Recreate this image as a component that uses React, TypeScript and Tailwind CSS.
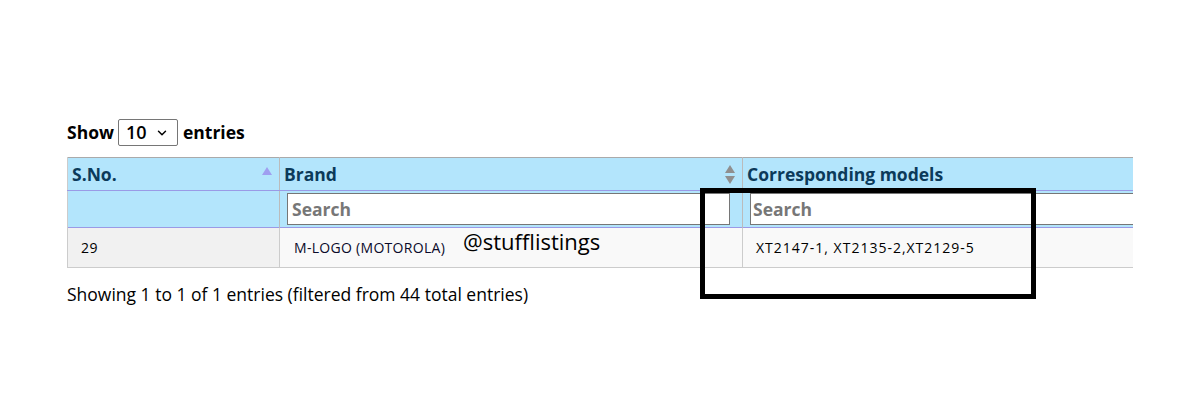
import { ChevronDown } from 'lucide-react';

const SortAsc = () => (
  <svg width="10" height="8" viewBox="0 0 10 8" className="shrink-0">
    <path d="M5 0 L10 8 L0 8 Z" fill="#9f9ff0" />
  </svg>
);

const SortBoth = () => (
  <svg width="10" height="19" viewBox="0 0 10 19" className="shrink-0">
    <path d="M5 0 L10 8 L0 8 Z" fill="#8f8f8f" />
    <path d="M5 19 L10 11 L0 11 Z" fill="#8f8f8f" />
  </svg>
);

const App = () => {
  return (
    <div className="relative w-[1177px] h-[418px] bg-white font-['Open_Sans',sans-serif] text-black overflow-hidden">
      <div className="pl-[67px] pt-[119px]">
        {/* Length menu */}
        <div className="flex items-center h-[27px] text-[17.5px] font-bold">
          <span>Show</span>
          <div className="ml-[4px] mr-[5px] w-[60px] h-[27px] border border-[#767676] rounded-[2px] flex items-center justify-between pl-[7px] pr-[8px] text-[18px] font-semibold">
            <span>10</span>
            <ChevronDown className="w-[14px] h-[14px]" strokeWidth={2.5} />
          </div>
          <span>entries</span>
        </div>

        {/* Table */}
        <div className="mt-[11px] w-[1066px] overflow-hidden">
          <table className="table-fixed border-collapse w-[1200px]">
            <colgroup>
              <col className="w-[212px]" />
              <col className="w-[463px]" />
              <col className="w-[525px]" />
            </colgroup>
            <thead>
              <tr className="bg-[#b3e5fc] h-[33px] text-[17.5px] font-bold text-[#0b3a5a] border-t border-t-[#aaaaaa]">
                <th className="text-left pl-[4px] pr-[7px] border-l border-l-[#cccccc] border-r border-r-[#bbbbbb] border-b border-b-[#9a9ae6]">
                  <div className="flex items-center justify-between">
                    <span>S.No.</span>
                    <span className="-mt-[6px]"><SortAsc /></span>
                  </div>
                </th>
                <th className="text-left pl-[4px] pr-[7px] border-r border-r-[#bbbbbb] border-b border-b-[#9a9ae6]">
                  <div className="flex items-center justify-between">
                    <span>Brand</span>
                    <SortBoth />
                  </div>
                </th>
                <th className="text-left pl-[4px] border-b border-b-[#9a9ae6]">
                  <span>Corresponding models</span>
                </th>
              </tr>
              <tr className="bg-[#b3e5fc] h-[37px] border-b border-b-[#9a9ae6]">
                <th className="border-l border-l-[#cccccc] border-r border-r-[#bbbbbb]"></th>
                <th className="text-left pl-[7px] border-r border-r-[#bbbbbb]">
                  <input
                    placeholder="Search"
                    className="w-[443px] h-[32px] bg-white border border-[#767676] px-[4px] text-[17.5px] font-bold placeholder:text-[#777777] outline-none"
                  />
                </th>
                <th className="text-left pl-[7px]">
                  <input
                    placeholder="Search"
                    className="w-[500px] h-[32px] bg-white border border-[#767676] px-[2px] text-[17.5px] font-bold placeholder:text-[#777777] outline-none"
                  />
                </th>
              </tr>
            </thead>
            <tbody>
              <tr className="h-[40px] text-[14px] border-b border-b-[#cccccc]">
                <td className="bg-[#f1f1f1] pl-[13px] border-l border-l-[#cccccc] border-r border-r-[#cccccc] tracking-[0.5px]">29</td>
                <td className="bg-[#f9f9f9] pl-[14px] border-r border-r-[#cccccc] text-[#0a0a2a] tracking-[0.3px]">M-LOGO (MOTOROLA)</td>
                <td className="bg-[#f9f9f9] pl-[13px] tracking-[1px]">XT2147-1, XT2135-2,XT2129-5</td>
              </tr>
            </tbody>
          </table>
        </div>

        {/* Info */}
        <div className="mt-[14px] text-[17.5px] leading-[24px]">
          Showing 1 to 1 of 1 entries (filtered from 44 total entries)
        </div>
      </div>

      {/* Watermark */}
      <div className="absolute left-[463px] top-[226px] text-[22px] leading-[30px]">@stufflistings</div>

      {/* Highlight box */}
      <div className="absolute left-[700px] top-[188px] w-[336px] h-[111px] border-[5px] border-black" />
    </div>
  );
};

export default App;
